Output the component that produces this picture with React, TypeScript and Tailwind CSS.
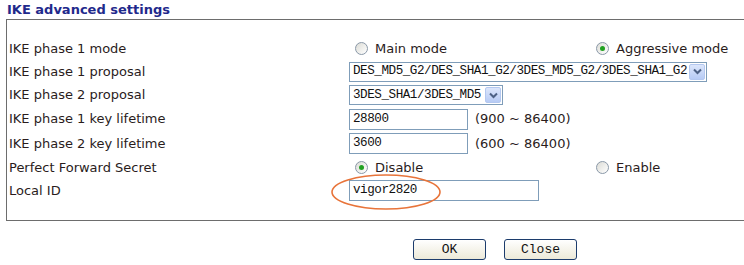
import React from 'react';

const labelFont = { fontFamily: '"DejaVu Sans", Verdana, sans-serif' };
const monoFont = { fontFamily: '"Liberation Mono", "Courier New", monospace' };

function Radio({ checked }: { checked?: boolean }) {
  return (
    <span className="inline-flex w-[13px] h-[13px] rounded-full border border-[#8a98a8] bg-gradient-to-br from-[#dcdcd6] to-white items-center justify-center mr-[7px] shrink-0">
      {checked && <span className="w-[5px] h-[5px] rounded-full bg-[#21a121]" />}
    </span>
  );
}

function Select({ value, width }: { value: string; width: string }) {
  return (
    <div className={`flex items-center h-[20px] border border-[#7f9db9] bg-white ${width}`}>
      <span className="flex-1 pl-[3px] text-[12.6px] tracking-[-0.45px] text-[#111] whitespace-nowrap overflow-hidden" style={monoFont}>
        {value}
      </span>
      <span className="w-[16px] h-[16px] mr-[1px] rounded-[2px] border border-[#b4c8f0] bg-gradient-to-b from-[#dce6fb] to-[#b7cbf5] flex items-center justify-center shrink-0">
        <svg width="9" height="7" viewBox="0 0 9 7">
          <path d="M1 1.5 L4.5 5 L8 1.5" fill="none" stroke="#4d6185" strokeWidth="2" />
        </svg>
      </span>
    </div>
  );
}

function TextBox({ value, width }: { value: string; width: string }) {
  return (
    <div className={`h-[21px] border border-[#7f9db9] bg-white flex items-center pl-[3px] ${width}`}>
      <span className="text-[12.6px] tracking-[-0.45px] text-[#111]" style={monoFont}>{value}</span>
    </div>
  );
}

function Row({ label, h, children }: { label: string; h: string; children: React.ReactNode }) {
  return (
    <div className={`flex items-center ${h}`}>
      <div className="w-[342px] shrink-0 pl-[2px]">{label}</div>
      <div className="flex items-center flex-1">{children}</div>
    </div>
  );
}

export default function App() {
  return (
    <div className="w-[744px] h-[265px] bg-white overflow-hidden text-[13px] text-[#2a1c1c]" style={labelFont}>
      <div className="h-[19px] pl-[7px] leading-[19px] font-bold text-[#1f2a8c]">IKE advanced settings</div>

      <div className="ml-[6px] border border-r-0 border-[#6d6d6d] pt-[17px] pb-[18px]">
        <Row label="IKE phase 1 mode" h="h-[23px]">
          <div className="flex items-center w-[247px] pl-[6px]">
            <Radio /> Main mode
          </div>
          <div className="flex items-center">
            <Radio checked /> Aggressive mode
          </div>
        </Row>
        <Row label="IKE phase 1 proposal" h="h-[23px]">
          <Select value="DES_MD5_G2/DES_SHA1_G2/3DES_MD5_G2/3DES_SHA1_G2" width="w-[358px]" />
        </Row>
        <Row label="IKE phase 2 proposal" h="h-[24px]">
          <Select value="3DES_SHA1/3DES_MD5" width="w-[154px]" />
        </Row>
        <Row label="IKE phase 1 key lifetime" h="h-[24px]">
          <TextBox value="28800" width="w-[119px]" />
          <span className="ml-[7px]">(900 ~ 86400)</span>
        </Row>
        <Row label="IKE phase 2 key lifetime" h="h-[25px]">
          <TextBox value="3600" width="w-[119px]" />
          <span className="ml-[7px]">(600 ~ 86400)</span>
        </Row>
        <Row label="Perfect Forward Secret" h="h-[23px]">
          <div className="flex items-center w-[247px] pl-[6px]">
            <Radio checked /> Disable
          </div>
          <div className="flex items-center">
            <Radio /> Enable
          </div>
        </Row>
        <Row label="Local ID" h="h-[23px]">
          <div className="relative">
            <TextBox value="vigor2820" width="w-[190px]" />
            <svg
              className="absolute left-[-19px] top-[-7px] pointer-events-none"
              width="112"
              height="38"
              viewBox="0 0 112 38"
            >
              <ellipse cx="56" cy="19" rx="54" ry="17" fill="none" stroke="#e8743a" strokeWidth="1.6" />
            </svg>
          </div>
        </Row>
      </div>

      <div className="flex gap-[18px] pl-[413px] mt-[18px]">
        <button
          className="w-[73px] h-[21px] rounded-[3px] border border-[#1c3c6c] bg-gradient-to-b from-white to-[#ece9d8] text-[13px] text-[#111]"
          style={monoFont}
        >
          OK
        </button>
        <button
          className="w-[73px] h-[21px] rounded-[3px] border border-[#1c3c6c] bg-gradient-to-b from-white to-[#ece9d8] text-[13px] text-[#111]"
          style={monoFont}
        >
          Close
        </button>
      </div>
    </div>
  );
}
